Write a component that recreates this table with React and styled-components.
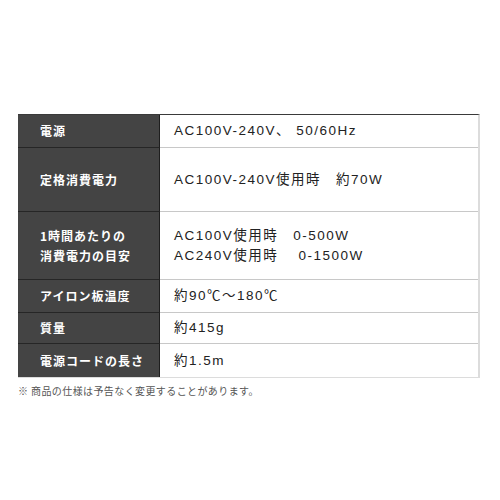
import styled, { createGlobalStyle } from 'styled-components';

const GlobalStyle = createGlobalStyle`
  html, body {
    margin: 0;
    padding: 0;
    background: #ffffff;
  }
  body {
    font-family: "Liberation Sans", "Noto Sans CJK JP", sans-serif;
  }
`;

const Page = styled.div`
  width: 500px;
  height: 500px;
  padding: 114px 20px 0 18px;
  box-sizing: border-box;
`;

const Table = styled.div`
  display: grid;
  grid-template-columns: 142px 1fr;
  border-top: 1px solid #3a3a3a;
  border-right: 2px solid #dcdcdc;
  border-bottom: 1px solid #dcdcdc;
`;

const Label = styled.div`
  height: ${(p) => p.h}px;
  display: flex;
  flex-direction: column;
  justify-content: center;
  padding-left: 22px;
  background: #444444;
  color: #ffffff;
  font-family: "Noto Sans CJK JP", sans-serif;
  font-weight: 700;
  font-size: 12px;
  line-height: 20px;
  letter-spacing: 1px;
  border-bottom: 1px solid #262626;
  border-right: 1px solid #1e1e1e;
  box-sizing: border-box;

  &:nth-last-child(2) {
    border-bottom: none;
  }
`;

const Value = styled.div`
  height: ${(p) => p.h}px;
  display: flex;
  flex-direction: column;
  justify-content: center;
  padding-left: 14px;
  color: #222222;
  font-size: 13.5px;
  line-height: 20px;
  letter-spacing: 1.5px;
  border-bottom: 1px solid #c8c8c8;
  box-sizing: border-box;

  &:last-child {
    border-bottom: none;
  }
`;

const Note = styled.p`
  margin: 5px 0 0;
  color: #555555;
  font-family: "Noto Sans CJK JP", sans-serif;
  font-size: 10px;
  letter-spacing: 0.4px;
`;

const rows = [
  { label: ['電源'], value: ['AC100V-240V、 50/60Hz'], h: 33 },
  { label: ['定格消費電力'], value: ['AC100V-240V使用時　約70W'], h: 64 },
  { label: ['1時間あたりの', '消費電力の目安'], value: ['AC100V使用時　0-500W', 'AC240V使用時　 0-1500W'], h: 68 },
  { label: ['アイロン板温度'], value: ['約90℃～180℃'], h: 33 },
  { label: ['質量'], value: ['約415g'], h: 31 },
  { label: ['電源コードの長さ'], value: ['約1.5m'], h: 33 },
];

export default function App() {
  return (
    <Page>
      <GlobalStyle />
      <Table>
        {rows.map((r, i) => [
          <Label key={`l${i}`} h={r.h}>
            {r.label.map((t) => (
              <span key={t}>{t}</span>
            ))}
          </Label>,
          <Value key={`v${i}`} h={r.h}>
            {r.value.map((t) => (
              <span key={t}>{t}</span>
            ))}
          </Value>,
        ])}
      </Table>
      <Note>※ 商品の仕様は予告なく変更することがあります。</Note>
    </Page>
  );
}
